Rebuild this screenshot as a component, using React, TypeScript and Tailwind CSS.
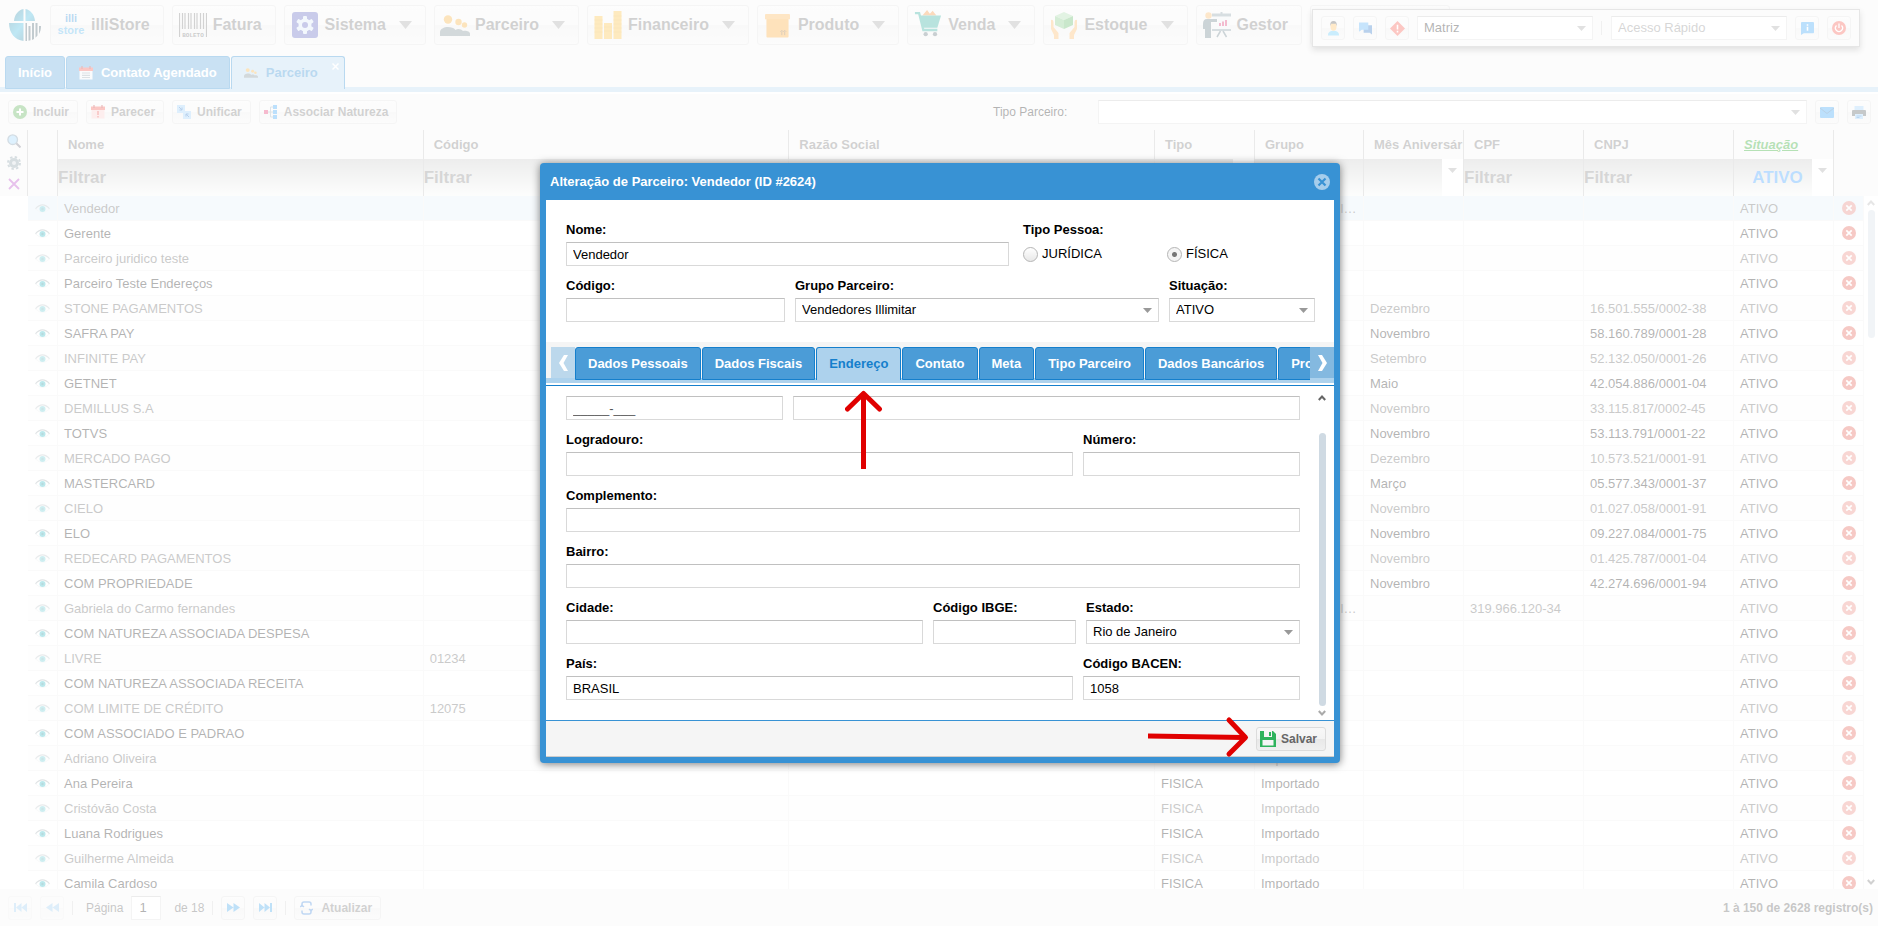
import React from "react";

const btn =
  "flex items-center rounded-[3px] border border-[#dedede] bg-[linear-gradient(#f7f7f7,#f3f3f3_50%,#ebebeb_51%,#f3f3f3)] font-bold text-[#666]";

/* ---------- icons ---------- */

const Caret = ({ className = "" }: { className?: string }) => (
  <svg className={className} width="9" height="5" viewBox="0 0 9 5" aria-hidden="true">
    <path d="M0 0h9L4.500 5z" fill="#999" />
  </svg>
);

const Logo = () => (
  <svg width="34" height="34" viewBox="0 0 34 34" aria-hidden="true">
    <defs>
      <linearGradient id="lg" x1="0" y1="0" x2="1" y2="1">
        <stop offset="0" stopColor="#0e5f7c" />
        <stop offset="0.5" stopColor="#29b1dc" />
        <stop offset="1" stopColor="#0b4f6a" />
      </linearGradient>
    </defs>
    <path d="M15.5 1C10 2 6.500 7 6 13h9.500zM17.500 1v12h9.500C26.500 7 23 2 17.500 1zM15.500 15v18C7 32 1 25 1 15z" fill="url(#lg)" />
    <path d="M17.500 15h1.500v18h-1.500zM20.500 18h2v14.300l-2 .5zM24 15h2v16l-2 1zM27.500 15h2v12.500l-2 2.300zM31 18h2c0 3-.7 6-2 8z" fill="#33505f" />
  </svg>
);

const Store = () => (
  <svg width="28" height="24" viewBox="0 0 28 24" aria-hidden="true">
    <text x="14" y="9" textAnchor="middle" fontSize="11" fontWeight="700" fill="#1482d2" fontFamily="Liberation Sans, sans-serif">illi</text>
    <text x="14" y="21" textAnchor="middle" fontSize="11" fontWeight="700" fill="#3aa8e8" fontFamily="Liberation Sans, sans-serif">store</text>
  </svg>
);

const Boleto = () => (
  <svg width="28" height="26" viewBox="0 0 28 26" aria-hidden="true">
    <path d="M.5 1v24M3.500 1v16M6 1v16M9.500 1v16M12 1v16M15.500 1v16M18 1v16M21.500 1v16M24.500 1v16M27.500 1v24" stroke="#6a6a6a" strokeWidth="1.200" />
    <text x="14" y="25" textAnchor="middle" fontSize="6" fontWeight="700" fill="#555" fontFamily="Liberation Mono, monospace">BOLETO</text>
  </svg>
);

const Gear = () => (
  <svg width="26" height="26" viewBox="0 0 26 26" aria-hidden="true">
    <rect width="26" height="26" rx="3" fill="#4a52b8" />
    <g fill="#d7e6f7">
      <circle cx="13" cy="13" r="6.500" />
      <rect x="11" y="4" width="4" height="18" rx="1" />
      <rect x="11" y="4" width="4" height="18" rx="1" transform="rotate(60 13 13)" />
      <rect x="11" y="4" width="4" height="18" rx="1" transform="rotate(120 13 13)" />
    </g>
    <circle cx="13" cy="13" r="3" fill="#4a52b8" />
  </svg>
);

const People = ({ w = 30 }: { w?: number }) => (
  <svg width={w} height={w * 0.7} viewBox="0 0 30 21" aria-hidden="true">
    <circle cx="8" cy="4.500" r="4.200" fill="#f5a623" />
    <circle cx="18.500" cy="7" r="3.200" fill="#f5a623" />
    <circle cx="24.500" cy="10" r="2.700" fill="#f5a623" />
    <path d="M0 21v-4c0-3 4-5 8-5 3 0 6 .8 7.500 3 2-2 6-1 7.500 1 3-1 7 .6 7 2.500V21z" fill="#6d8087" />
  </svg>
);

const Coins = () => (
  <svg width="28" height="28" viewBox="0 0 28 28" aria-hidden="true">
    <path d="M4.500 28V5M14 28V12M23.500 28V0" stroke="#fbb829" strokeWidth="8" />
    <path d="M.5 9h8M.5 13h8M.5 17h8M.5 21h8M10 16h8M10 20h8M19.500 5h8M19.500 9h8M19.500 13h8M19.500 17h8M19.500 21h8" stroke="#e9a61c" strokeWidth=".7" />
  </svg>
);

const Box = () => (
  <svg width="25" height="25" viewBox="0 0 26 26" aria-hidden="true">
    <path d="M1.500 6h23v18.500q0 1-1 1h-21q-1 0-1-1z" fill="#fa9d1c" />
    <path d="M1 1h24q1 0 1 1v4.500H0V2q0-1 1-1z" fill="#fbab3f" />
    <path d="M17.500 23v-4M20.500 23v-4M16 19.500l1.500-1.500 1.500 1.500 1.500-1.500 1.500 1.500" stroke="#8a5a1c" fill="none" />
  </svg>
);

const Cart = () => (
  <svg className="mb-1" width="28" height="28" viewBox="0 0 28 30" aria-hidden="true">
    <path d="M8 7l5-6 3 4 3-3 4 5z" fill="#f58220" />
    <path d="M5 7h23l-4 13H9z" fill="#13a290" />
    <path d="M0 4.500h4.500L9 22.500h15" fill="none" stroke="#13a290" strokeWidth="2.500" />
    <circle cx="11.500" cy="27" r="2.300" fill="#4b5f68" />
    <circle cx="21.500" cy="27" r="2.300" fill="#4b5f68" />
  </svg>
);

const Hands = () => (
  <svg width="28" height="28" viewBox="0 0 28 28" aria-hidden="true">
    <path d="M14 1l9 4-9 4-9-4z" fill="#9ed6a0" />
    <path d="M5 5l9 4v9l-9-4z" fill="#72c176" />
    <path d="M23 5l-9 4v9l9-4z" fill="#4caf50" />
    <path d="M1 9q2-1 2.500 2v5l5 6v6H4v-4L1 18zM27 9q-2-1-2.500 2v5l-5 6v6H24v-4l3-6z" fill="#fbb052" />
  </svg>
);

const Presenter = () => (
  <svg width="28" height="26" viewBox="0 0 28 26" aria-hidden="true">
    <circle cx="5.500" cy="3.500" r="3.200" fill="#f9b050" />
    <path d="M0 12q0-5 4-5h10v3H8v16H2V17H0z" fill="#546e7a" />
    <path d="M9 1.500h19v3H9zM9 17h19v2H9zM17.500 0h2v2h-2z" fill="#78909c" />
    <path d="M10 5h17v12H9V11h6V7h-5z" fill="#eceff1" />
    <path d="M17 14v-3M20 14V9.500M23 14V8" stroke="#d81b60" strokeWidth="2" />
    <path d="M17.500 19L14 25M20 19l3.500 6" stroke="#546e7a" strokeWidth="1.500" />
  </svg>
);

const Calendar = ({ kind }: { kind: "list" | "alert" }) => (
  <svg width="14" height="14" viewBox="0 0 14 14" aria-hidden="true">
    <path d="M.5 4h13v9.500H.5z" fill={kind === "list" ? "#eef1f4" : "#f9c7c7"} />
    <path d="M0 1.500h14V5H0z" fill="#f0453a" />
    <path d="M3 0v3M11 0v3" stroke="#b71c1c" strokeWidth="1.200" />
    {kind === "list" ? (
      <path d="M3 7h8M3 9.300h8M3 11.500h8" stroke="#8a9aa5" strokeWidth="1.200" />
    ) : (
      <path d="M7 6v4M7 11v1.500" stroke="#e53935" strokeWidth="1.600" />
    )}
  </svg>
);

const Plus = () => (
  <svg width="14" height="14" viewBox="0 0 14 14" aria-hidden="true">
    <circle cx="7" cy="7" r="7" fill="#43a53c" />
    <path d="M7 3.500v7M3.500 7h7" stroke="#fff" strokeWidth="2" />
  </svg>
);

const Merge = () => (
  <svg width="14" height="14" viewBox="0 0 14 14" aria-hidden="true">
    <path d="M0 0h8v8H0zM6 6h8v8H6z" fill="#90caf9" />
    <path d="M2 2l3 3M5 2.500V5H2.500M12 12L9 9M9 11.500V9h2.500" stroke="#1565c0" fill="none" />
  </svg>
);

const Tree = () => (
  <svg width="14" height="14" viewBox="0 0 14 14" aria-hidden="true">
    <path d="M0 5h4v4H0z" fill="#e2185b" />
    <path d="M4 7h5M6.500 2v10M6.500 2H9M6.500 12H9" stroke="#90a4ae" fill="none" />
    <path d="M9 0h4v4H9zM9 5h4v4H9zM9 10h4v4H9z" fill="#2196f3" />
  </svg>
);

const UserIcon = () => (
  <svg width="13" height="16" viewBox="0 0 14 16" aria-hidden="true">
    <path d="M1 16q0-5 6-5t6 5z" fill="#4fc3f7" />
    <ellipse cx="7" cy="6.500" rx="3.300" ry="4.500" fill="#ffb74d" />
    <path d="M3.500 6Q3 .5 7 .5T10.500 6L9.500 3.500h-5z" fill="#424242" />
  </svg>
);

const Chat = () => (
  <svg width="13" height="14" viewBox="0 0 14 14" aria-hidden="true">
    <path d="M5 4h9v10l-2.500-2H5z" fill="#1565c0" />
    <path d="M0 1h10v8H3l-3 2z" fill="#42a5f5" />
  </svg>
);

const Alert = () => (
  <svg width="15" height="15" viewBox="0 0 16 16" aria-hidden="true">
    <path d="M8 0l8 8-8 8-8-8z" fill="#f44336" />
    <path d="M8 4v5M8 10.500v1.700" stroke="#fff" strokeWidth="1.700" />
  </svg>
);

const Info = () => (
  <svg width="13" height="13" viewBox="0 0 14 14" aria-hidden="true">
    <path d="M1 0h12q1 0 1 1v10q0 1-1 1H3l-3 2V1q0-1 1-1z" fill="#2196f3" />
    <path d="M7 2.500v1.500M7 5v4.500" stroke="#fff" strokeWidth="1.700" />
  </svg>
);

const Power = () => (
  <svg width="14" height="14" viewBox="0 0 14 14" aria-hidden="true">
    <circle cx="7" cy="7" r="7" fill="#f44336" />
    <path d="M7 2.500V7M4.500 4.500a3.500 3.500 0 1 0 5 0" stroke="#fff" strokeWidth="1.300" fill="none" />
  </svg>
);

const Mail = () => (
  <svg width="14" height="11" viewBox="0 0 14 11" aria-hidden="true">
    <rect width="14" height="11" rx="1" fill="#2196f3" />
    <path d="M0 1l7 5.500L14 1" stroke="#1668ac" fill="none" />
  </svg>
);

const Printer = () => (
  <svg width="14" height="13" viewBox="0 0 14 13" aria-hidden="true">
    <path d="M2.500 0h9v4h-9z" fill="#90caf9" />
    <path d="M1 4h12q1 0 1 1v5H0V5q0-1 1-1z" fill="#424a4f" />
    <path d="M3 8h8v5H3z" fill="#90caf9" />
    <path d="M4.500 10h5M4.500 11.500h3" stroke="#1976d2" />
  </svg>
);

const Eye = () => (
  <svg width="15" height="9" viewBox="0 0 15 9" aria-hidden="true">
    <path d="M.4 4.800Q7.500-3 14.600 4.800" stroke="#95a1a6" strokeWidth="1.100" fill="none" />
    <path d="M.4 4.800Q7.500 12 14.600 4.800" stroke="#dbe1e3" strokeWidth=".8" fill="none" />
    <circle cx="7.500" cy="5" r="3" fill="#1cb3c0" />
    <circle cx="7.500" cy="5" r="1.200" fill="#0f7f8a" />
  </svg>
);

const Remove = () => (
  <svg width="14" height="14" viewBox="0 0 14 14" aria-hidden="true">
    <circle cx="7" cy="7" r="7" fill="#e04b3d" />
    <path d="M4.300 4.300l5.400 5.400M9.700 4.300L4.300 9.700" stroke="#fff" strokeWidth="1.700" />
  </svg>
);

const Chevron = ({ down = false, color }: { down?: boolean; color: string }) => (
  <svg width="8" height="6" viewBox="0 0 8 6" aria-hidden="true">
    <path d={down ? "M.8 1L4 4.500 7.200 1" : "M.8 5L4 1.500 7.200 5"} stroke={color} strokeWidth="2" fill="none" />
  </svg>
);

const PagerIcon = ({ d }: { d: string }) => (
  <svg width="15" height="9" viewBox="0 0 15 9" aria-hidden="true">
    <path d={d} fill="#2b9ae8" />
  </svg>
);

const Refresh = () => (
  <svg width="13" height="14" viewBox="0 0 13 14" fill="none" stroke="#2d7bd8" strokeWidth="1.500" aria-hidden="true">
    <path d="M2 6V3Q2 1 4 1h5q2 0 2 2v1.500M11 8v3q0 2-2 2H4q-2 0-2-2V9.500" />
    <path d="M0 6l2-2 2 2M9 8l2 2 2-2" strokeWidth="1.200" />
  </svg>
);

/* ---------- data ---------- */

type Row = [string, string?, string?, string?, string?, string?, string?];

// nome, código, tipo, grupo, mês, cpf, cnpj
const rows: Row[] = [
  ["Vendedor", "", "FISICA", "Vendedores Illimitar"],
  ["Gerente"],
  ["Parceiro juridico teste"],
  ["Parceiro Teste Endereços"],
  ["STONE PAGAMENTOS", "", "", "", "Dezembro", "", "16.501.555/0002-38"],
  ["SAFRA PAY", "", "", "", "Novembro", "", "58.160.789/0001-28"],
  ["INFINITE PAY", "", "", "", "Setembro", "", "52.132.050/0001-26"],
  ["GETNET", "", "", "", "Maio", "", "42.054.886/0001-04"],
  ["DEMILLUS S.A", "", "", "", "Novembro", "", "33.115.817/0002-45"],
  ["TOTVS", "", "", "", "Novembro", "", "53.113.791/0001-22"],
  ["MERCADO PAGO", "", "", "", "Dezembro", "", "10.573.521/0001-91"],
  ["MASTERCARD", "", "", "", "Março", "", "05.577.343/0001-37"],
  ["CIELO", "", "", "", "Novembro", "", "01.027.058/0001-91"],
  ["ELO", "", "", "", "Novembro", "", "09.227.084/0001-75"],
  ["REDECARD PAGAMENTOS", "", "", "", "Novembro", "", "01.425.787/0001-04"],
  ["COM PROPRIEDADE", "", "", "", "Novembro", "", "42.274.696/0001-94"],
  ["Gabriela do Carmo fernandes", "", "FISICA", "Vendedores Illimitar", "", "319.966.120-34"],
  ["COM NATUREZA ASSOCIADA DESPESA"],
  ["LIVRE", "01234"],
  ["COM NATUREZA ASSOCIADA RECEITA"],
  ["COM LIMITE DE CRÉDITO", "12075"],
  ["COM ASSOCIADO E PADRAO"],
  ["Adriano Oliveira", "", "FISICA", "Importado"],
  ["Ana Pereira", "", "FISICA", "Importado"],
  ["Cristóvão Costa", "", "FISICA", "Importado"],
  ["Luana Rodrigues", "", "FISICA", "Importado"],
  ["Guilherme Almeida", "", "FISICA", "Importado"],
  ["Camila Cardoso", "", "FISICA", "Importado"],
];

const menu: { label: string; icon: React.ReactNode; arrow?: boolean }[] = [
  { label: "illiStore", icon: <Store /> },
  { label: "Fatura", icon: <Boleto /> },
  { label: "Sistema", icon: <Gear />, arrow: true },
  { label: "Parceiro", icon: <People />, arrow: true },
  { label: "Financeiro", icon: <Coins />, arrow: true },
  { label: "Produto", icon: <Box />, arrow: true },
  { label: "Venda", icon: <Cart />, arrow: true },
  { label: "Estoque", icon: <Hands />, arrow: true },
  { label: "Gestor", icon: <Presenter /> },
];

/* ---------- building blocks ---------- */

const IconButton = ({ label, children }: { label: string; children: React.ReactNode }) => (
  <button aria-label={label} className={`${btn} size-6 shrink-0 justify-center`}>
    {children}
  </button>
);

const TextButton = ({ icon, children }: { icon: React.ReactNode; children: React.ReactNode }) => (
  <button className={`${btn} h-6 gap-[6px] pr-2 pl-1 text-xs`}>
    {icon}
    {children}
  </button>
);

const control =
  "block h-6 w-full rounded-none border border-[#d9d9d9] border-t-[#c0c0c0] bg-white pl-[6px] text-[13px] outline-none";

function Select({ id, label, value, className = "", dim = false }: { id: string; label?: string; value: string; className?: string; dim?: boolean }) {
  return (
    <div className={`relative ${className}`}>
      <select id={id} aria-label={label} className={`${control} appearance-none pr-5 ${dim ? "text-[#777]" : "text-black"}`}>
        <option>{value}</option>
      </select>
      <Caret className="pointer-events-none absolute top-[10px] right-[7px]" />
    </div>
  );
}

function Field({ id, label, className = "", children, value = "" }: { id: string; label: string; className?: string; children?: React.ReactNode; value?: string }) {
  return (
    <div className={`min-w-0 ${className}`}>
      <label htmlFor={id} className="block h-[22px] text-[13px] leading-5 font-bold text-black">
        {label}
      </label>
      {children ?? <input id={id} defaultValue={value} className={`${control} text-black`} />}
    </div>
  );
}

function Radio({ label, checked = false }: { label: string; checked?: boolean }) {
  return (
    <label className="flex w-36 items-center gap-1 text-[13px] text-black">
      <input
        type="radio"
        name="tipoPessoa"
        defaultChecked={checked}
        className="size-[15px] appearance-none rounded-full border border-[#b5b5b5] bg-[linear-gradient(#fff,#e8e8e8)] checked:bg-[radial-gradient(circle,#777_0_2px,#f5f5f5_3px)]"
      />
      {label}
    </label>
  );
}

function TopMenu() {
  return (
    <header className="relative flex h-14 shrink-0 items-start gap-2 px-2 pt-[5px]">
      <div className="flex h-10 w-[34px] shrink-0 items-center">
        <Logo />
      </div>
      {menu.map((m) => (
        <button key={m.label} className={`${btn} h-10 shrink-0 pr-[13px] pl-1 text-base`}>
          <span className="mr-1 flex w-8 justify-center">{m.icon}</span>
          {m.label}
          {m.arrow && (
            <svg className="ml-[13px]" width="13" height="8" viewBox="0 0 13 8" aria-hidden="true">
              <path d="M0 0h13L6.500 8z" fill="#999" />
            </svg>
          )}
        </button>
      ))}
      <div className={`${btn} h-10 w-[140px] shrink-0`} />
      <div className="absolute top-[9px] right-[18px] flex h-[38px] items-center gap-2 border border-[#aaa] bg-[#f5f5f5] px-2 shadow-[0_3px_6px_#999]">
        <IconButton label="Usuário"><UserIcon /></IconButton>
        <IconButton label="Mensagens"><Chat /></IconButton>
        <IconButton label="Alertas"><Alert /></IconButton>
        <Select id="empresa" label="Empresa" value="Matriz" className="w-44" />
        <span className="h-[14px] w-0.5 border-l border-[#ccc]" />
        <Select id="acesso" label="Acesso Rápido" value="Acesso Rápido" className="w-44" dim />
        <IconButton label="Informações"><Info /></IconButton>
        <IconButton label="Sair"><Power /></IconButton>
      </div>
    </header>
  );
}

const tab = "flex h-[33px] shrink-0 items-center rounded-t-[3px] border border-[#157fcc] px-3 text-[13px] font-bold whitespace-nowrap";
const tabOff = "bg-[#4b9cd7] text-white";
const tabOn = "border-b-0 bg-[#add2ed] text-[#157fcc]";

function PageTabs() {
  return (
    <nav className="flex h-9 shrink-0 items-start gap-px border-b-[5px] border-[#add2ed] pl-[5px]">
      <button className={`${tab} ${tabOff}`}>Início</button>
      <button className={`${tab} ${tabOff} gap-2`}>
        <Calendar kind="list" />
        Contato Agendado
      </button>
      <button className={`${tab} ${tabOn} relative gap-2 pr-[26px]`}>
        <People w={14} />
        Parceiro
        <svg className="absolute top-[6px] right-[5px]" width="7" height="7" viewBox="0 0 7 7" aria-hidden="true">
          <path d="M.5.5l6 6M6.500.5l-6 6" stroke="#fff" strokeWidth="1.500" />
        </svg>
      </button>
    </nav>
  );
}

const th = "h-[29px] overflow-hidden border-r border-[#b8b8b8] px-[10px] text-left text-[13px] whitespace-nowrap font-bold";
const filter = "h-[37px] border-r border-[#b8b8b8] bg-[linear-gradient(#c2c2c2,#f7f9f7)] p-0";

function FilterText({ label }: { label: string }) {
  return (
    <th className={filter}>
      <input aria-label={label} placeholder="Filtrar" className="block h-full w-full bg-transparent text-[17px] font-bold outline-none placeholder:text-[#777]" />
    </th>
  );
}

function FilterSelect({ label, value = "" }: { label: string; value?: string }) {
  return (
    <th className={filter}>
      <div className="relative h-full">
        <select aria-label={label} className="block h-full w-full appearance-none bg-[linear-gradient(#fff,#fff)] bg-[length:21px_100%] bg-right bg-no-repeat pr-3 text-center text-[17px] font-bold text-[#1e90ff] outline-none">
          <option>{value}</option>
        </select>
        <Caret className="pointer-events-none absolute top-[9px] right-[6px]" />
      </div>
    </th>
  );
}

function Grid() {
  return (
    <main className="flex min-h-0 flex-1 overflow-hidden bg-white">
      <div className="w-7 shrink-0">
        <div className="flex h-[66px] flex-col items-center gap-2 border-r border-[#b8b8b8] bg-[#f5f5f5] pt-1">
          <svg width="14" height="14" viewBox="0 0 14 14" aria-hidden="true">
            <path d="M9 9l4.500 4.500" stroke="#667" strokeWidth="2" />
            <circle cx="5.700" cy="5.700" r="4.800" fill="#90d0fa" stroke="#6c8aa0" strokeWidth="1.300" />
          </svg>
          <svg width="14" height="14" viewBox="0 0 14 14" aria-hidden="true">
            <circle cx="7" cy="7" r="5" fill="#78909c" />
            <circle cx="7" cy="7" r="6" fill="none" stroke="#78909c" strokeWidth="2" strokeDasharray="2.400 2.310" />
            <circle cx="7" cy="7" r="2" fill="#cfd8dc" />
          </svg>
          <svg width="12" height="12" viewBox="0 0 12 12" aria-hidden="true">
            <path d="M1 1l10 10M11 1L1 11" stroke="#b02fc0" strokeWidth="1.800" />
          </svg>
        </div>
      </div>
      <div className="min-w-0 flex-1 overflow-hidden">
        <table className="w-full table-fixed border-separate border-spacing-0">
          <colgroup>
            <col className="w-[30px]" />
            <col />
            <col />
            <col />
            <col className="w-[100px]" />
            <col className="w-[109px]" />
            <col className="w-[100px]" />
            <col className="w-[120px]" />
            <col className="w-[150px]" />
            <col className="w-[100px]" />
            <col className="w-[30px]" />
          </colgroup>
          <thead className="bg-[#f5f5f5] text-[#666]">
            <tr>
              <th rowSpan={2} className="border-r border-[#b8b8b8]" />
              <th className={th}>Nome</th>
              <th className={th}>Código</th>
              <th className={th}>Razão Social</th>
              <th className={th}>Tipo</th>
              <th className={th}>Grupo</th>
              <th className={`${th} pr-0`}>Mês Aniversário</th>
              <th className={th}>CPF</th>
              <th className={th}>CNPJ</th>
              <th className={`${th} text-[#089a08] italic underline`}>Situação</th>
              <th rowSpan={2} />
            </tr>
            <tr>
              <FilterText label="Filtrar nome" />
              <FilterText label="Filtrar código" />
              <FilterText label="Filtrar razão social" />
              <FilterSelect label="Filtrar tipo" />
              <FilterText label="Filtrar grupo" />
              <FilterSelect label="Filtrar mês" />
              <FilterText label="Filtrar CPF" />
              <FilterText label="Filtrar CNPJ" />
              <FilterSelect label="Filtrar situação" value="ATIVO" />
            </tr>
          </thead>
          <tbody className="text-[13px]">
            {rows.map(([nome, codigo, tipo, grupo, mes, cpf, cnpj], i) => {
              const dim = i % 2 === 0;
              const cells = [nome, codigo, "", tipo, grupo, mes, cpf, cnpj, "ATIVO"];
              const bg = i === 0 ? "bg-[#e2eff8]" : dim ? "bg-[#fafafa]" : "bg-white";
              return (
                <tr key={nome} className={`${bg} ${dim ? "text-[#4d4d4d]" : "text-black"}`}>
                  <td className="h-[25px] border-r border-b border-[#ededed] p-0">
                    <button aria-label={`Ver ${nome}`} className={`flex w-full justify-center ${dim ? "opacity-70" : ""}`}>
                      <Eye />
                    </button>
                  </td>
                  {cells.map((c, j) => (
                    <td key={j} className="truncate border-r border-b border-[#ededed] px-[6px] pt-0.5 pb-0">
                      {c}
                    </td>
                  ))}
                  <td className="border-r border-b border-[#ededed] p-0">
                    <button aria-label={`Excluir ${nome}`} className={`flex w-full justify-center ${dim ? "opacity-75" : ""}`}>
                      <Remove />
                    </button>
                  </td>
                </tr>
              );
            })}
          </tbody>
        </table>
      </div>
      <div className="flex w-[14px] shrink-0 flex-col items-center">
        <div className="h-[66px] w-full shrink-0 bg-[#f5f5f5]" />
        <div className="flex min-h-0 w-full flex-1 flex-col items-center justify-between py-1">
          <div className="flex flex-col items-center gap-1">
            <Chevron color="#aaa" />
            <div className="h-32 w-[7px] rounded-full bg-[#cfdae3]" />
          </div>
          <Chevron down color="#666" />
        </div>
      </div>
    </main>
  );
}

function Pager() {
  const sep = "h-[14px] w-px shrink-0 bg-[#ccc]";
  return (
    <footer className="flex h-[37px] shrink-0 items-center justify-between bg-[#f5f5f5] pr-[5px] pl-2 text-xs text-[#444]">
      <div className="flex items-center gap-2">
        <span className="flex gap-2 opacity-50">
          <IconButton label="Primeira página"><PagerIcon d="M1 0h2v9H1zM8.500 0v9L3 4.500zM14 0v9L8.500 4.500z" /></IconButton>
          <IconButton label="Página anterior"><PagerIcon d="M7.500 0v9L1 4.500zM14 0v9L7.500 4.500z" /></IconButton>
        </span>
        <span className={sep} />
        <label className="ml-[5px] flex items-center gap-2">
          Página
          <input defaultValue="1" className="h-6 w-[30px] border border-[#d9d9d9] border-t-[#c0c0c0] bg-white pl-[7px] text-[13px] text-black" />
        </label>
        <span className="ml-[5px]">de 18</span>
        <span className={sep} />
        <IconButton label="Próxima página"><PagerIcon d="M1 0v9l6.500-4.500zM7.500 0v9L14 4.500z" /></IconButton>
        <IconButton label="Última página"><PagerIcon d="M1 0v9l5.500-4.500zM6.500 0v9L12 4.500zM12 0h2v9h-2z" /></IconButton>
        <span className={sep} />
        <button className={`${btn} h-6 gap-2 pr-2 pl-[5px] text-xs`}>
          <Refresh />
          Atualizar
        </button>
      </div>
      <span className="font-bold">1 à 150 de 2628 registro(s)</span>
    </footer>
  );
}

const dialogTabs = ["Dados Pessoais", "Dados Fiscais", "Endereço", "Contato", "Meta", "Tipo Parceiro", "Dados Bancários", "Produtos"];

function Dialog() {
  return (
    <section
      role="dialog"
      aria-modal="true"
      aria-labelledby="dlg-title"
      className="relative flex h-[600px] w-[800px] max-w-full flex-col rounded-[4px] bg-[#3892d4] px-[6px] pb-[6px] shadow-[0_1px_8px_#777]"
    >
      <header className="flex h-[37px] shrink-0 items-center justify-between pr-1 pl-1">
        <h1 id="dlg-title" className="text-[13px] font-bold text-white">
          Alteração de Parceiro: Vendedor (ID #2624)
        </h1>
        <button aria-label="Fechar">
          <svg width="16" height="16" viewBox="0 0 16 16" aria-hidden="true">
            <circle cx="8" cy="8" r="8" fill="#a5cdec" />
            <path d="M4.500 4.500l7 7M11.500 4.500l-7 7" stroke="#3892d4" strokeWidth="2.200" />
          </svg>
        </button>
      </header>

      <div className="flex min-h-0 flex-1 flex-col bg-white">
        <div className="flex h-[142px] shrink-0 flex-col gap-[10px] pt-5 pr-[19px] pl-5">
          <div className="flex gap-[14px]">
            <Field id="nome" label="Nome:" value="Vendedor" className="w-[443px]" />
            <fieldset>
              <legend className="h-[22px] text-[13px] leading-5 font-bold text-black">Tipo Pessoa:</legend>
              <div className="flex h-6 items-center">
                <Radio label="JURÍDICA" />
                <Radio label="FÍSICA" checked />
              </div>
            </fieldset>
          </div>
          <div className="flex gap-[10px]">
            <Field id="codigo" label="Código:" className="w-[219px]" />
            <Field id="grupo" label="Grupo Parceiro:" className="flex-1">
              <Select id="grupo" value="Vendedores Illimitar" />
            </Field>
            <Field id="situacao" label="Situação:" className="w-[146px]">
              <Select id="situacao" value="ATIVO" />
            </Field>
          </div>
        </div>

        <div className="flex h-[41px] shrink-0 bg-[#f5f5f5] bg-[linear-gradient(#add2ed,#add2ed)] bg-[length:100%_5px] bg-bottom bg-no-repeat pt-[5px] pl-[5px]">
          <button aria-label="Abas anteriores" className="flex h-[31px] w-6 shrink-0 items-center justify-center bg-[#bcd8ec]">
            <svg width="9" height="16" viewBox="0 0 9 16" aria-hidden="true">
              <path d="M5 0h4L4.500 8 9 16H5L0 8z" fill="#fff" />
            </svg>
          </button>
          <div role="tablist" className="flex min-w-0 flex-1 gap-px overflow-hidden">
            {dialogTabs.map((t) => (
              <button key={t} role="tab" aria-selected={t === "Endereço"} className={`${tab} ${t === "Endereço" ? tabOn : tabOff}`}>
                {t}
              </button>
            ))}
          </div>
          <button aria-label="Próximas abas" className="flex h-[31px] w-6 shrink-0 items-center justify-center bg-[#84b9e0]">
            <svg width="9" height="16" viewBox="0 0 9 16" aria-hidden="true">
              <path d="M4 0H0l4.500 8L0 16h4l5-8z" fill="#fff" />
            </svg>
          </button>
        </div>

        <div className="mt-[2px] flex min-h-0 flex-1 border-y border-[#157fcc] border-b-[#3892d4]">
          <div className="flex flex-1 flex-col gap-[10px] overflow-hidden pt-[10px] pr-[18px] pl-5">
            <div className="flex gap-[10px]">
              <div className="w-[217px]">
                <input aria-label="CEP" placeholder="_____-___" className={`${control} placeholder:text-[#555]`} />
              </div>
              <div className="flex-1">
                <input aria-label="Endereço" className={control} />
              </div>
            </div>
            <div className="flex gap-[10px]">
              <Field id="logradouro" label="Logradouro:" className="flex-1" />
              <Field id="numero" label="Número:" className="w-[217px]" />
            </div>
            <Field id="complemento" label="Complemento:" />
            <Field id="bairro" label="Bairro:" />
            <div className="flex gap-[10px]">
              <Field id="cidade" label="Cidade:" className="flex-1" />
              <Field id="ibge" label="Código IBGE:" className="w-[143px]" />
              <Field id="estado" label="Estado:" className="w-[214px]">
                <Select id="estado" value="Rio de Janeiro" />
              </Field>
            </div>
            <div className="flex gap-[10px]">
              <Field id="pais" label="País:" value="BRASIL" className="flex-1" />
              <Field id="bacen" label="Código BACEN:" value="1058" className="w-[217px]" />
            </div>
          </div>
          <div className="flex w-4 shrink-0 flex-col items-center justify-between pt-[9px] pr-2 pb-1">
            <div className="w-2"><Chevron color="#666" /></div>
            <div className="mt-8 mb-1 w-[7px] flex-1 rounded-full bg-[#cfdae3]" />
            <div className="w-2"><Chevron down color="#aaa" /></div>
          </div>
        </div>

        <footer className="flex h-9 shrink-0 items-center justify-end border-b border-[#ccc] bg-[#f5f5f5] pr-2">
          <button className="flex h-6 w-[70px] items-center gap-[5px] rounded-[3px] border border-[#dcdcdc] bg-[linear-gradient(#f8f8f8,#f3f3f3_50%,#e8e8e8_51%,#f0f0f0)] pl-[3px] text-xs font-bold text-[#666]">
            <svg width="16" height="16" viewBox="0 0 16 16" aria-hidden="true">
              <path d="M0 0h13l3 3v13H0z" fill="#2fb35d" />
              <path d="M4 0h8v6H4zM2.500 9h11v5.500h-11z" fill="#f5f5f5" />
              <path d="M9 1h2v4H9z" fill="#2fb35d" />
            </svg>
            Salvar
          </button>
        </footer>
      </div>

      <svg className="pointer-events-none absolute top-[226px] left-[305px]" width="38" height="80" viewBox="0 0 38 80" fill="none" stroke="#e00000" strokeWidth="5" aria-hidden="true">
        <path d="M18.500 80V6" />
        <path d="M2.500 20L18.500 4.500 34.500 20" strokeLinecap="round" strokeLinejoin="round" />
      </svg>
      <svg className="pointer-events-none absolute top-[553px] left-[608px]" width="102" height="42" viewBox="0 0 102 42" fill="none" stroke="#e00000" strokeWidth="5" aria-hidden="true">
        <path d="M0 20l96 1.500" />
        <path d="M81 4l16.500 17.500L81 38" strokeLinecap="round" strokeLinejoin="round" />
      </svg>
    </section>
  );
}

export default function App() {
  return (
    <div className="relative flex h-screen flex-col overflow-hidden bg-[#f5f5f5] font-['Liberation_Sans',Arial,sans-serif]">
      <TopMenu />
      <PageTabs />
      <div className="flex h-[38px] shrink-0 items-center gap-2 border-t-2 border-white px-2 pr-[7px]">
        <TextButton icon={<Plus />}>Incluir</TextButton>
        <TextButton icon={<Calendar kind="alert" />}>Parecer</TextButton>
        <TextButton icon={<Merge />}>Unificar</TextButton>
        <TextButton icon={<Tree />}>Associar Natureza</TextButton>
        <label htmlFor="tipo" className="ml-auto w-[97px] text-xs text-black">Tipo Parceiro:</label>
        <Select id="tipo" value="" className="w-[709px]" />
        <IconButton label="Enviar e-mail"><Mail /></IconButton>
        <IconButton label="Imprimir"><Printer /></IconButton>
      </div>
      <Grid />
      <Pager />

      <div className="absolute inset-0 flex items-center justify-center bg-white/70 pl-0.5">
        <Dialog />
      </div>
    </div>
  );
}
